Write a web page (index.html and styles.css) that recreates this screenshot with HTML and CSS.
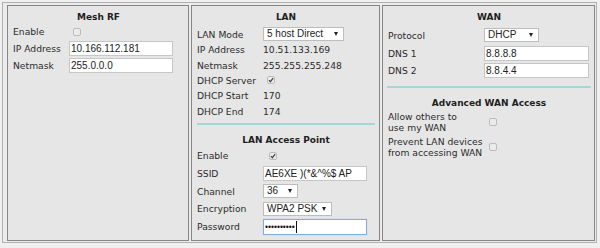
FILE: index.html
```html
<!DOCTYPE html>
<html lang="en">
<head>
    <meta charset="UTF-8">
    <meta name="viewport" content="width=device-width, initial-scale=1.0">
    <title>Node Setup</title>
    <link rel="stylesheet" href="styles.css">
</head>
<body>
    <div class="config">
        <div class="panel panel-mesh">
            <h3>Mesh RF</h3>
            <div class="rows rows-mesh">
                <label>Enable</label>
                <span class="check"></span>
                <label for="mesh-ip">IP Address</label>
                <input class="text" type="text" id="mesh-ip" value="10.166.112.181">
                <label for="mesh-mask">Netmask</label>
                <input class="text" type="text" id="mesh-mask" value="255.0.0.0">
            </div>
        </div>

        <div class="panel panel-lan">
            <h3>LAN</h3>
            <div class="rows rows-lan">
                <label for="lan-mode">LAN Mode</label>
                <span class="select select-mode">
                    <select id="lan-mode">
                        <option>5 host Direct</option>
                    </select>
                </span>
                <label>IP Address</label>
                <span class="value">10.51.133.169</span>
                <label>Netmask</label>
                <span class="value">255.255.255.248</span>
                <label>DHCP Server</label>
                <span class="check checked"><svg viewBox="0 0 9 9"><path d="M2.2 4.6 L3.8 6.4 L6.9 2.4" /></svg></span>
                <label>DHCP Start</label>
                <span class="value">170</span>
                <label>DHCP End</label>
                <span class="value">174</span>
            </div>

            <div class="sep"></div>

            <h3 class="sub">LAN Access Point</h3>
            <div class="rows rows-ap">
                <label>Enable</label>
                <span class="check checked check-ap"><svg viewBox="0 0 9 9"><path d="M2.2 4.6 L3.8 6.4 L6.9 2.4" /></svg></span>
                <label for="ssid">SSID</label>
                <input class="text" type="text" id="ssid" value="AE6XE )(*&amp;^%$ AP">
                <label for="channel">Channel</label>
                <span class="select select-channel">
                    <select id="channel">
                        <option>36</option>
                    </select>
                </span>
                <label for="encryption">Encryption</label>
                <span class="select select-enc">
                    <select id="encryption">
                        <option>WPA2 PSK</option>
                    </select>
                </span>
                <label for="password">Password</label>
                <span class="pass">
                    <input class="text text-pass" type="password" id="password" value="secretkey1">
                </span>
            </div>
        </div>

        <div class="panel panel-wan">
            <h3>WAN</h3>
            <div class="rows rows-wan">
                <label for="protocol">Protocol</label>
                <span class="select select-proto">
                    <select id="protocol">
                        <option>DHCP</option>
                    </select>
                </span>
                <label for="dns1">DNS 1</label>
                <input class="text text-wide" type="text" id="dns1" value="8.8.8.8">
                <label for="dns2">DNS 2</label>
                <input class="text text-wide" type="text" id="dns2" value="8.8.4.4">
            </div>

            <div class="sep sep-wan"></div>

            <h3 class="sub-wan">Advanced WAN Access</h3>
            <div class="rows rows-adv">
                <label>Allow others to<br>use my WAN</label>
                <span class="check"></span>
                <label>Prevent LAN devices<br>from accessing WAN</label>
                <span class="check"></span>
            </div>
        </div>
    </div>
</body>
</html>
```

FILE: styles.css
```css
body {
    margin: 0;
    background: #f0f0f0;
    font-family: 'DejaVu Sans', Verdana, sans-serif;
    font-size: 9.2px;
    color: #2b2b2b;
}

.config {
    display: flex;
    gap: 2px;
    width: 588px;
    margin: 2px 0 0 2px;
    padding: 2px 1px 1px 4px;
    border: 1px solid #b0b0b0;
    background: #ececec;
}

.panel {
    box-sizing: border-box;
    height: 236px;
    padding: 4px 4px 0 5px;
    border: 1px solid #868686;
    background: #e6e6e6;
}

.panel-mesh { width: 182px; }
.panel-lan { width: 189px; }
.panel-wan { width: 213px; }

h3 {
    margin: 0;
    font-size: 9px;
    line-height: 14px;
    font-weight: bold;
    text-align: center;
    color: #1e1e1e;
}

.rows {
    display: grid;
    align-items: center;
    justify-items: start;
}

.rows label {
    white-space: nowrap;
}

.rows-mesh {
    grid-template-columns: 56px 1fr;
    grid-template-rows: 15px 16px 16px;
    row-gap: 1px;
}

.rows-lan {
    margin-top: 2px;
    grid-template-columns: 66px 1fr;
    grid-template-rows: 16px repeat(5, 15.4px);
}

.rows-ap {
    grid-template-columns: 66px 1fr;
    grid-auto-rows: 17.7px;
}

.rows-wan {
    margin-top: 2px;
    grid-template-columns: 96px 1fr;
    grid-template-rows: 18px 18px 17px;
}

.rows-adv {
    margin-top: 1px;
    grid-template-columns: 96px 1fr;
    row-gap: 3px;
    line-height: 11px;
}

.sep {
    height: 2px;
    margin-top: 4px;
    background: #a3d8d8;
}

.sep-wan {
    margin: 7px -1px 0 -1px;
}

.sub { margin-top: 8px; }
.sub-wan { margin-top: 8px; }

.text {
    box-sizing: border-box;
    width: 104px;
    height: 15px;
    margin: 0;
    padding: 0 1px;
    border: 1px solid #c6c6c6;
    border-radius: 0;
    background: #fff;
    font-family: 'Liberation Sans', Arial, sans-serif;
    font-size: 10px;
    color: #222;
    outline: none;
}

.text-wide { width: 105px; }

.pass {
    position: relative;
    display: block;
}

.text-pass {
    display: block;
    height: 16px;
    font-size: 8.5px;
    color: #111;
    border-color: #7eaee3;
    box-shadow: 0 0 1px #a9c9ee;
}

/* text caret of the focused field */
.pass::after {
    content: "";
    position: absolute;
    left: 33px;
    top: 2px;
    width: 1px;
    height: 12px;
    background: #111;
}

.select {
    position: relative;
    display: inline-block;
    height: 14px;
}

.select select {
    appearance: none;
    -webkit-appearance: none;
    box-sizing: border-box;
    width: 100%;
    height: 14px;
    margin: 0;
    padding: 0 0 0 3px;
    border: 1px solid #bdbdbd;
    border-radius: 0;
    background: #fff;
    font-family: 'Liberation Sans', Arial, sans-serif;
    font-size: 10px;
    line-height: 12px;
    color: #222;
}

.select::after {
    content: "";
    position: absolute;
    right: 6px;
    top: 5px;
    border-left: 2.5px solid transparent;
    border-right: 2.5px solid transparent;
    border-top: 4px solid #222;
    pointer-events: none;
}

.select-mode { width: 81px; }
.select-channel { width: 35px; }
.select-enc { width: 69px; }
.select-proto { width: 55px; }

.check {
    box-sizing: border-box;
    display: block;
    width: 8px;
    height: 8px;
    margin-left: 4px;
    border: 1px solid #bcbcbc;
    border-radius: 2px;
    background: #ebebeb;
}

.check svg {
    display: block;
    width: 8px;
    height: 8px;
    margin: -1px 0 0 -1px;
}

.check svg path {
    fill: none;
    stroke: #444;
    stroke-width: 1.4;
}

.check-ap { margin-left: 6px; }

.rows-adv .check { margin-left: 5px; }
```
